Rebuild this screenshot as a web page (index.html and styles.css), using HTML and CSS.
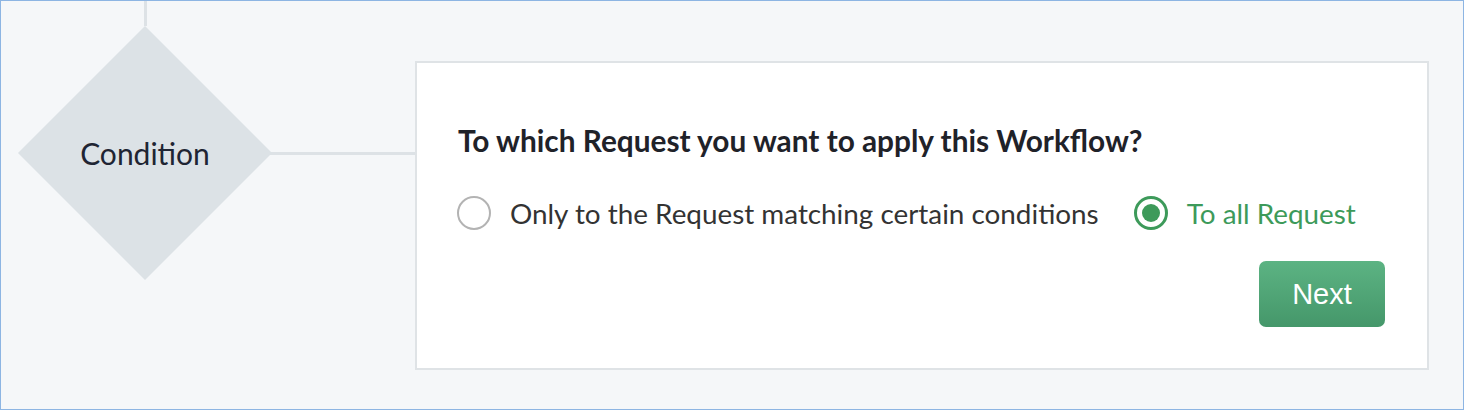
FILE: index.html
```html
<!DOCTYPE html>
<html lang="en">
<head>
<meta charset="utf-8">
<title>Workflow condition</title>
<link rel="stylesheet" href="styles.css">
</head>
<body>
<div class="frame">
  <div class="node">
    <div class="stem"></div>
    <div class="node-row">
      <div class="diamond"><span>Condition</span></div>
      <div class="connector"></div>
    </div>
  </div>
  <div class="card">
    <h2 class="question">To which Request you want to apply this Workflow?</h2>
    <div class="options">
      <label class="option">
        <span class="radio"></span>
        <span class="option-text">Only to the Request matching certain conditions</span>
      </label>
      <label class="option option-selected">
        <span class="radio radio-on"><span class="dot"></span></span>
        <span class="option-text">To all Request</span>
      </label>
    </div>
    <div class="actions">
      <button class="btn-next">Next</button>
    </div>
  </div>
</div>
</body>
</html>
```
FILE: styles.css
```css
* { box-sizing: border-box; }
html, body { margin: 0; padding: 0; }
body {
  width: 1464px;
  height: 410px;
  font-family: Lato, "Open Sans", sans-serif;
  background: #f5f7f9;
}
.frame {
  width: 1464px;
  height: 410px;
  border: 1px solid #8db5e3;
  background: #f5f7f9;
  display: flex;
  align-items: flex-start;
}
.node {
  width: 414px;
  padding-left: 17px;
  display: flex;
  flex-direction: column;
}
.stem {
  width: 3px;
  height: 25px;
  margin-left: 126px;
  background: #dde2e6;
}
.node-row {
  display: flex;
  align-items: center;
}
.diamond {
  width: 254px;
  height: 254px;
  flex: none;
  background: #dce2e6;
  clip-path: polygon(50% 0, 100% 50%, 50% 100%, 0 50%);
  display: flex;
  align-items: center;
  justify-content: center;
  font-size: 30px;
  color: #1f2533;
}
.connector {
  flex: 1;
  height: 3px;
  margin-left: -2px;
  background: #dde2e6;
}
.card {
  margin-top: 60px;
  width: 1014px;
  height: 309px;
  background: #fff;
  border: 2px solid #dfe3e6;
  padding: 0 42px 0 40px;
  display: flex;
  flex-direction: column;
}
.question {
  margin: 60px 0 0 1px;
  font-size: 29.8px;
  font-weight: 700;
  line-height: 36px;
  color: #1f2229;
}
.options {
  display: flex;
  align-items: center;
  margin-top: 37px;
  gap: 35px;
}
.option {
  display: flex;
  align-items: center;
  gap: 19px;
  height: 34px;
  font-size: 27.85px;
  color: #333;
}
.option-selected { color: #3d9a5a; }
.radio {
  width: 34px;
  height: 34px;
  flex: none;
  border-radius: 50%;
  border: 2px solid #b3b3b3;
  display: flex;
  align-items: center;
  justify-content: center;
}
.radio-on {
  border: 3px solid #3d9a5a;
}
.dot {
  width: 18px;
  height: 18px;
  border-radius: 50%;
  background: #3d9a5a;
}
.actions {
  display: flex;
  justify-content: flex-end;
  margin-top: 31px;
}
.btn-next {
  width: 126px;
  height: 66px;
  border: none;
  border-radius: 7px;
  background: linear-gradient(#5cb383, #45976a);
  color: #fff;
  font-family: "Liberation Sans", Arial, sans-serif;
  font-size: 29px;
  padding: 0;
}
```
